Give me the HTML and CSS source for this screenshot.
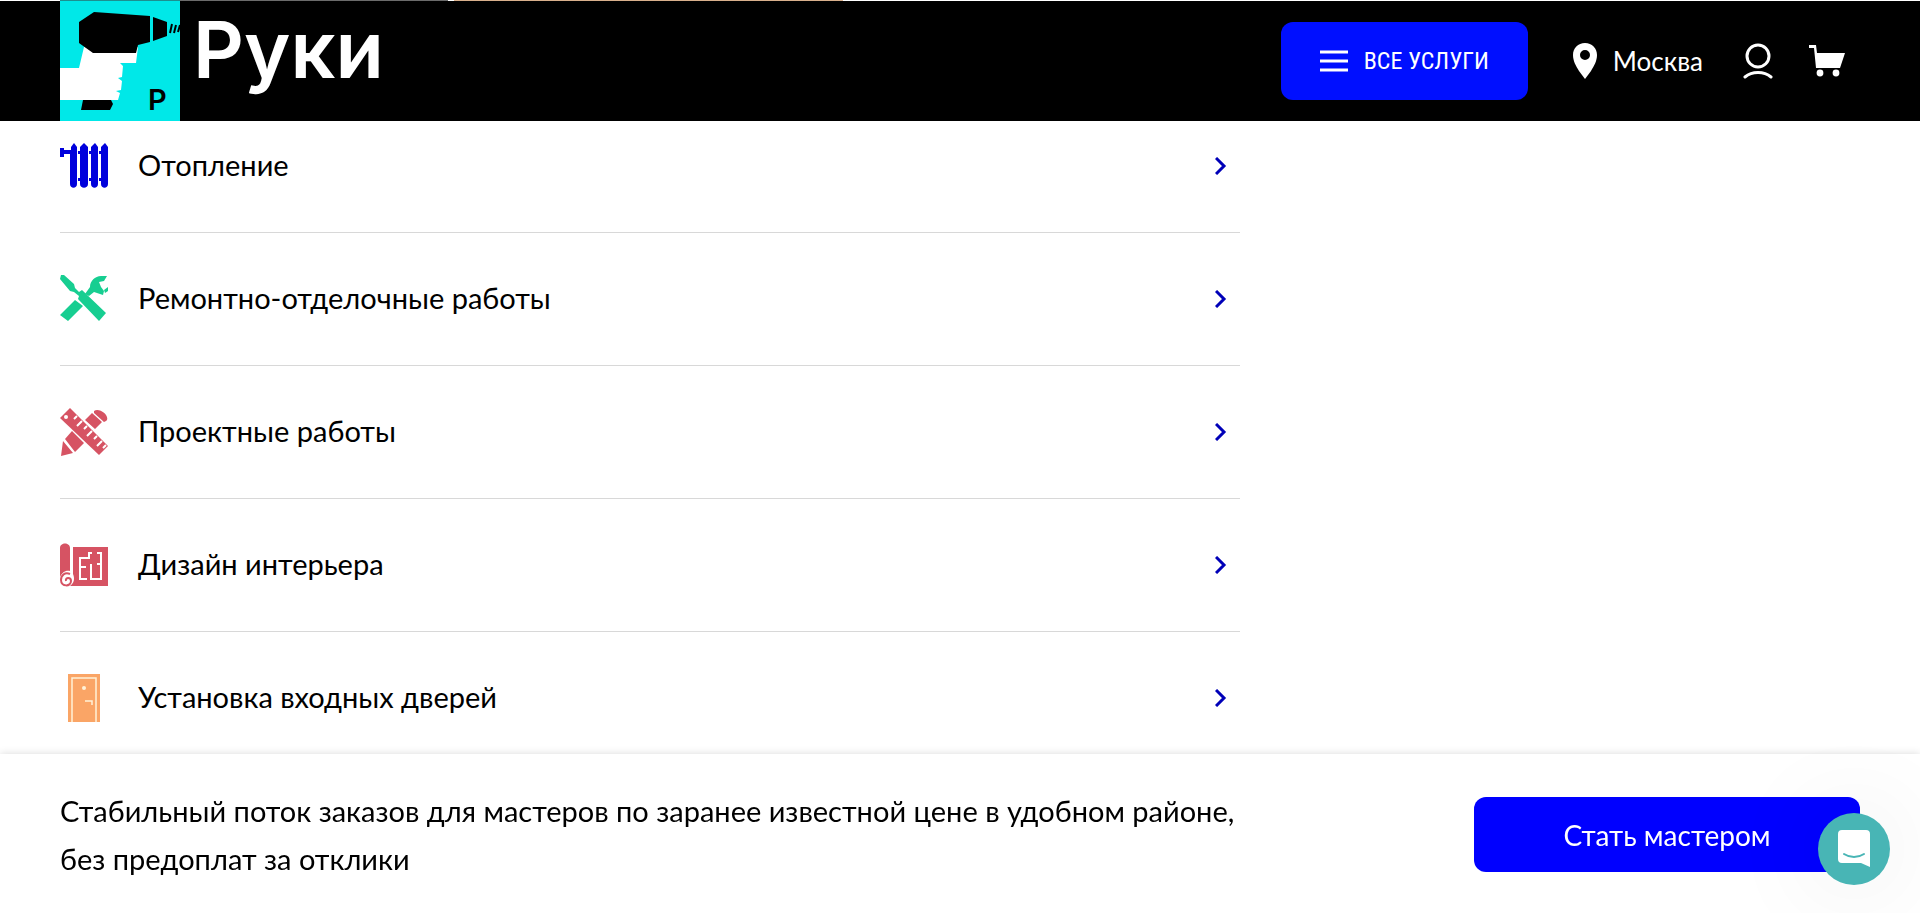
FILE: index.html
```html
<!DOCTYPE html>
<html lang="ru">
<head>
    <meta charset="UTF-8">
    <meta name="viewport" content="width=device-width, initial-scale=1.0">
    <title>Руки</title>
    <link rel="stylesheet" href="styles.css">
</head>
<body>
    <header class="header">
        <a href="#" class="logo">
            <svg class="logo-icon" viewBox="0 0 120 120" aria-hidden="true">
                <rect width="120" height="120" fill="#00e8e8"/>
                <path d="M24 46h54l-2 16H60l3 3-1 11-4 1 4 3-1 9-5 1 4 2-2 7H0V67h19z" fill="#fff"/>
                <path d="M34 11l56 4v26l-12 3-2 8H33L19 42V21zM93 16l14 5v14l-14 5zM23 99h28l2 4-3 6H21z"/>
                <path d="M112 23l-2 9M116 24l-2 8M120 24l-2 7" stroke="#000" stroke-width="2"/>
                <text class="logo-letter" x="88" y="109">Р</text>
            </svg>
            <span class="logo-text">Руки</span>
        </a>
        <button type="button" class="services-btn">
            <svg width="28" height="22" viewBox="0 0 28 22" aria-hidden="true">
                <path d="M0 2h28M0 11h28M0 20h28" stroke="#fff" stroke-width="3"/>
            </svg>
            ВСЕ УСЛУГИ
        </button>
        <nav class="header-nav">
            <a href="#" class="city">
                <svg width="24" height="36" viewBox="0 0 24 36" aria-hidden="true">
                    <path fill="#fff" fill-rule="evenodd" d="M12 0C5 0 0 5 0 12c0 6 3 11 6 16l6 8 6-8c3-5 6-10 6-16C24 5 19 0 12 0zm0 7a5 5 0 1 1 0 10 5 5 0 0 1 0-10z"/>
                </svg>
                Москва
            </a>
            <a href="#" class="nav-icon" aria-label="Профиль">
                <svg width="30" height="36" viewBox="0 0 30 36" fill="none" stroke="#fff" stroke-width="3" stroke-linecap="round" aria-hidden="true">
                    <circle cx="15" cy="13" r="11"/>
                    <path d="M2 34c7-6 19-6 26 0"/>
                </svg>
            </a>
            <a href="#" class="nav-icon" aria-label="Корзина">
                <svg width="36" height="32" viewBox="0 0 36 32" fill="#fff" aria-hidden="true">
                    <path d="M0 0h7l1 8h28l-5 15H7L5 3H0z"/>
                    <circle cx="11" cy="28" r="3.4"/>
                    <circle cx="27" cy="28" r="3.4"/>
                </svg>
            </a>
        </nav>
    </header>

    <main class="content">
        <ul class="services">
            <li>
                <a href="#" class="service">
                    <svg class="service-icon" viewBox="0 0 48 48" fill="#0000dc" aria-hidden="true">
                        <path d="M0 6h4v2h7V5l3-4 3 4v37c0 5-7 5-7 0V12H4v3H0z"/>
                        <path d="M20 5l4-4 4 4v37c0 5-8 5-8 0v-3h-2v-3h2V12h-2V9h2zM31 5l4-4 3 4v37c0 5-7 5-7 0v-3h-2v-3h2V12h-2V9h2zM41 5l4-4 3 4v37c0 5-7 5-7 0v-3h-2v-3h2V12h-2V9h2z"/>
                    </svg>
                    <span class="service-name">Отопление</span>
                    <svg class="arrow" viewBox="0 0 12 18" aria-hidden="true"><path d="M1 1l8 8-8 8"/></svg>
                </a>
            </li>
            <li>
                <a href="#" class="service">
                    <svg class="service-icon" viewBox="0 0 48 48" fill="#17ce91" aria-hidden="true">
                        <path d="M1 0h3l10 9 1 4 4 4 3-2 24 23-7 8-21-22 1-3-5-4-4-1L0 4z"/>
                        <path d="M15 25l8 6L8 46l-8-6zM25 19l5-7c0-6 5-11 11-11h6l-3 5-5 1 2 5 3 4-1 4-9-3-5 4zM44 15l4-3v4l-3 2z"/>
                    </svg>
                    <span class="service-name">Ремонтно-отделочные работы</span>
                    <svg class="arrow" viewBox="0 0 12 18" aria-hidden="true"><path d="M1 1l8 8-8 8"/></svg>
                </a>
            </li>
            <li>
                <a href="#" class="service">
                    <svg class="service-icon" viewBox="0 0 48 48" fill="#d65363" aria-hidden="true">
                        <path d="M25 12l7-7 10 9-7 7zM34 3c6-4 17 6 12 10l-2 1-10-9zM12 23l12 12-9 9L5 31zM3 33l10 12-12 3z"/>
                        <path d="M10 0l38 38-9 9L0 10z"/>
                        <path d="M17 8l-3 3M22 13l-5 5M27 18l-3 3M32 23l-5 5M37 28l-3 3M42 33l-5 5M46 37l-3 3" stroke="#fff" stroke-width="2"/>
                        <circle cx="6" cy="9" r="2" fill="#fff"/>
                    </svg>
                    <span class="service-name">Проектные работы</span>
                    <svg class="arrow" viewBox="0 0 12 18" aria-hidden="true"><path d="M1 1l8 8-8 8"/></svg>
                </a>
            </li>
            <li>
                <a href="#" class="service">
                    <svg class="service-icon" viewBox="0 0 48 48" fill="none" aria-hidden="true">
                        <path d="M0 36V7c0-6 10-6 10 0v23C5 29 2 32 0 36zM13 6h35v39H10c4-3 5-7 3-12z" fill="#d65363"/>
                        <path d="M10 33c-5-2-9 1-9 6 0 7 10 7 10 1 0-4-6-4-5 0" stroke="#d65363" stroke-width="2"/>
                        <path d="M32 12h-3v5h-9v21h7M37 12h4v26H30M20 26h6M31 23v15M37 23h4" stroke="#fff" stroke-width="2"/>
                    </svg>
                    <span class="service-name">Дизайн интерьера</span>
                    <svg class="arrow" viewBox="0 0 12 18" aria-hidden="true"><path d="M1 1l8 8-8 8"/></svg>
                </a>
            </li>
            <li>
                <a href="#" class="service">
                    <svg class="service-icon" viewBox="0 0 48 48" fill="none" aria-hidden="true">
                        <path d="M8 0h32v48H8z" fill="#faa566"/>
                        <path d="M12 48V4h24v44M25 27h7v4" stroke="#fff2d8" stroke-width="1.5"/>
                        <circle cx="24" cy="14" r="2" fill="#fff2d8"/>
                    </svg>
                    <span class="service-name">Установка входных дверей</span>
                    <svg class="arrow" viewBox="0 0 12 18" aria-hidden="true"><path d="M1 1l8 8-8 8"/></svg>
                </a>
            </li>
        </ul>
    </main>

    <footer class="promo">
        <p class="promo-text">Стабильный поток заказов для мастеров по заранее известной цене в удобном районе, без предоплат за отклики</p>
        <button type="button" class="promo-btn">Стать мастером</button>
    </footer>

    <button type="button" class="chat-btn" aria-label="Чат">
        <svg width="32" height="38" viewBox="0 0 32 38" aria-hidden="true">
            <path d="M4 0h24q4 0 4 4v33l-9-4H4q-4 0-4-4V4q0-4 4-4z" fill="#fff"/>
            <path d="M6 24c6 4 14 4 20 0" fill="none" stroke="#48b5b5" stroke-width="2" stroke-linecap="round"/>
        </svg>
    </button>
</body>
</html>
```
FILE: styles.css
```css
* {
    box-sizing: border-box;
}
body {
    margin: 0;
    background-color: #fff;
    color: #000;
    font-family: Lato, sans-serif;
    font-size: 29px;
}
a {
    color: inherit;
    text-decoration: none;
}
button {
    border: none;
    font-family: inherit;
    cursor: pointer;
}
.header {
    position: fixed;
    top: 1px;
    left: 0;
    right: 0;
    z-index: 2;
    display: flex;
    align-items: center;
    height: 120px;
    padding: 0 75px 0 60px;
    background-color: #000;
    color: #fff;
}
.logo {
    display: flex;
    gap: 13px;
    margin-right: auto;
}
.logo-icon {
    width: 120px;
    height: 120px;
}
.logo-letter {
    font-family: Inter, sans-serif;
    font-size: 29px;
    font-weight: 600;
}
.logo-text {
    font-family: Inter, sans-serif;
    font-size: 79px;
    font-weight: 600;
    line-height: 96px;
}
.services-btn {
    display: flex;
    align-items: center;
    justify-content: center;
    gap: 16px;
    width: 247px;
    height: 78px;
    border-radius: 12px;
    background-color: #000fff;
    color: #fff;
    font-family: "Roboto Condensed", Roboto, sans-serif;
    font-size: 24px;
}
.header-nav {
    display: flex;
    align-items: center;
    gap: 36px;
    margin-left: 45px;
}
.city {
    display: flex;
    align-items: center;
    gap: 16px;
    margin-right: 4px;
    font-size: 26px;
}
.nav-icon {
    display: flex;
}
.content {
    padding: 100px 60px 0;
    /* edge of the section scrolled under the header */
    background: linear-gradient(to right, #fff 60px, #1c8f8f 60px 180px, #6b6b6b 180px 448px, #fff 448px 454px, #d9b08c 454px 843px, #fff 843px) top / 100% 1px no-repeat;
}
.services {
    width: 66%;
    max-width: 1180px;
    margin: 0;
    padding: 0;
    list-style: none;
}
.service {
    display: flex;
    align-items: center;
    gap: 30px;
    height: 133px;
    padding-right: 13px;
    border-bottom: 1px solid #d8d8d8;
}
.service-icon {
    width: 48px;
    height: 48px;
}
.service-name {
    flex: 1;
    padding-bottom: 4px;
}
.arrow {
    width: 12px;
    height: 18px;
    fill: none;
    stroke: #0000b8;
    stroke-width: 3;
}
.promo {
    position: fixed;
    left: 0;
    right: 0;
    bottom: 0;
    display: flex;
    align-items: center;
    justify-content: space-between;
    padding: 32px 60px 30px;
    background-color: #fff;
    box-shadow: 0 0 8px rgba(0, 0, 0, 0.15);
}
.promo-text {
    max-width: 1200px;
    margin: 0;
    padding-top: 1px;
    line-height: 48px;
}
.promo-btn {
    width: 386px;
    height: 75px;
    border-radius: 12px;
    background-color: #0000ff;
    color: #fff;
    font-size: 28px;
}
.chat-btn {
    position: fixed;
    right: 30px;
    bottom: 28px;
    display: flex;
    align-items: center;
    justify-content: center;
    width: 72px;
    height: 72px;
    padding: 0;
    border-radius: 50%;
    background-color: #48b5b5;
    box-shadow: 0 0 100px rgba(0, 0, 0, 0.1);
}
```
